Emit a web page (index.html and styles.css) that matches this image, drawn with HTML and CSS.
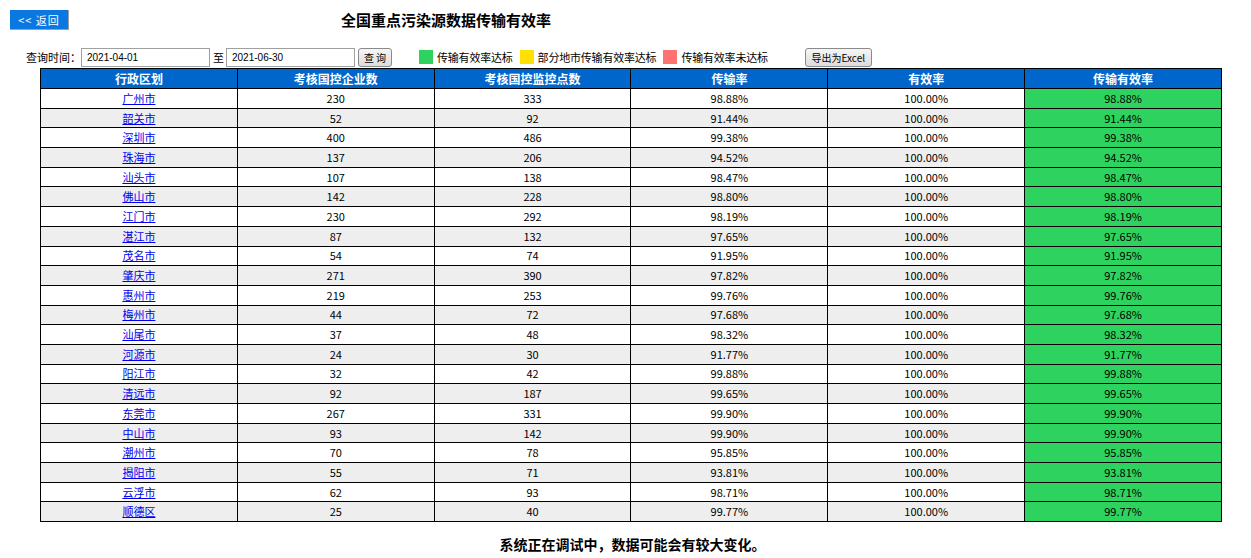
FILE: index.html
```html
<!DOCTYPE html>
<html lang="zh-CN">
<head>
    <meta charset="UTF-8">
    <title>全国重点污染源数据传输有效率</title>
    <link rel="stylesheet" href="styles.css">
</head>
<body>
    <div class="top-bar">
        <a class="back-btn" href="#">&lt;&lt; 返回</a>
        <h3 class="title">全国重点污染源数据传输有效率</h3>
    </div>

    <div class="filter-bar">
        <span class="label">查询时间：</span>
        <input type="text" class="date-input" value="2021-04-01">
        <span class="to">至</span>
        <input type="text" class="date-input" value="2021-06-30">
        <button class="btn query-btn">查 询</button>
        <span class="legend"><i class="swatch green"></i>传输有效率达标</span>
        <span class="legend"><i class="swatch yellow"></i>部分地市传输有效率达标</span>
        <span class="legend"><i class="swatch red"></i>传输有效率未达标</span>
        <button class="btn export-btn">导出为Excel</button>
    </div>

    <table class="data-table">
        <thead>
            <tr>
                <th>行政区划</th>
                <th>考核国控企业数</th>
                <th>考核国控监控点数</th>
                <th>传输率</th>
                <th>有效率</th>
                <th>传输有效率</th>
            </tr>
        </thead>
        <tbody>
            <tr><td><a href="#">广州市</a></td><td>230</td><td>333</td><td>98.88%</td><td>100.00%</td><td class="ok">98.88%</td></tr>
            <tr><td><a href="#">韶关市</a></td><td>52</td><td>92</td><td>91.44%</td><td>100.00%</td><td class="ok">91.44%</td></tr>
            <tr><td><a href="#">深圳市</a></td><td>400</td><td>486</td><td>99.38%</td><td>100.00%</td><td class="ok">99.38%</td></tr>
            <tr><td><a href="#">珠海市</a></td><td>137</td><td>206</td><td>94.52%</td><td>100.00%</td><td class="ok">94.52%</td></tr>
            <tr><td><a href="#">汕头市</a></td><td>107</td><td>138</td><td>98.47%</td><td>100.00%</td><td class="ok">98.47%</td></tr>
            <tr><td><a href="#">佛山市</a></td><td>142</td><td>228</td><td>98.80%</td><td>100.00%</td><td class="ok">98.80%</td></tr>
            <tr><td><a href="#">江门市</a></td><td>230</td><td>292</td><td>98.19%</td><td>100.00%</td><td class="ok">98.19%</td></tr>
            <tr><td><a href="#">湛江市</a></td><td>87</td><td>132</td><td>97.65%</td><td>100.00%</td><td class="ok">97.65%</td></tr>
            <tr><td><a href="#">茂名市</a></td><td>54</td><td>74</td><td>91.95%</td><td>100.00%</td><td class="ok">91.95%</td></tr>
            <tr><td><a href="#">肇庆市</a></td><td>271</td><td>390</td><td>97.82%</td><td>100.00%</td><td class="ok">97.82%</td></tr>
            <tr><td><a href="#">惠州市</a></td><td>219</td><td>253</td><td>99.76%</td><td>100.00%</td><td class="ok">99.76%</td></tr>
            <tr><td><a href="#">梅州市</a></td><td>44</td><td>72</td><td>97.68%</td><td>100.00%</td><td class="ok">97.68%</td></tr>
            <tr><td><a href="#">汕尾市</a></td><td>37</td><td>48</td><td>98.32%</td><td>100.00%</td><td class="ok">98.32%</td></tr>
            <tr><td><a href="#">河源市</a></td><td>24</td><td>30</td><td>91.77%</td><td>100.00%</td><td class="ok">91.77%</td></tr>
            <tr><td><a href="#">阳江市</a></td><td>32</td><td>42</td><td>99.88%</td><td>100.00%</td><td class="ok">99.88%</td></tr>
            <tr><td><a href="#">清远市</a></td><td>92</td><td>187</td><td>99.65%</td><td>100.00%</td><td class="ok">99.65%</td></tr>
            <tr><td><a href="#">东莞市</a></td><td>267</td><td>331</td><td>99.90%</td><td>100.00%</td><td class="ok">99.90%</td></tr>
            <tr><td><a href="#">中山市</a></td><td>93</td><td>142</td><td>99.90%</td><td>100.00%</td><td class="ok">99.90%</td></tr>
            <tr><td><a href="#">潮州市</a></td><td>70</td><td>78</td><td>95.85%</td><td>100.00%</td><td class="ok">95.85%</td></tr>
            <tr><td><a href="#">揭阳市</a></td><td>55</td><td>71</td><td>93.81%</td><td>100.00%</td><td class="ok">93.81%</td></tr>
            <tr><td><a href="#">云浮市</a></td><td>62</td><td>93</td><td>98.71%</td><td>100.00%</td><td class="ok">98.71%</td></tr>
            <tr><td><a href="#">顺德区</a></td><td>25</td><td>40</td><td>99.77%</td><td>100.00%</td><td class="ok">99.77%</td></tr>
        </tbody>
    </table>

    <p class="notice">系统正在调试中，数据可能会有较大变化。</p>
</body>
</html>
```

FILE: styles.css
```css
body {
    margin: 0;
    padding: 9px 0 0 0;
    font-family: "Noto Sans CJK SC", "Liberation Sans", sans-serif;
    font-size: 12px;
    color: #000;
    background: #fff;
}

/* Top bar */
.top-bar {
    display: flex;
    align-items: center;
    height: 21px;
    padding-left: 10px;
}

.back-btn {
    display: block;
    width: 59px;
    height: 20px;
    line-height: 20px;
    background-color: #0a78e0;
    border-bottom: 1px solid #a0a0a0;
    border-right: 1px solid #a0a0a0;
    color: #fff;
    text-align: center;
    text-decoration: none;
    font-size: 11px;
    letter-spacing: 1px;
    box-sizing: border-box;
}

.title {
    margin: 0 0 0 272px;
    font-size: 15px;
    font-weight: bold;
    line-height: 21px;
}

/* Filter bar */
.filter-bar {
    display: flex;
    align-items: center;
    height: 20px;
    margin-top: 17px;
    padding-left: 26px;
    font-size: 11px;
    white-space: nowrap;
}

.date-input {
    width: 129px;
    height: 19px;
    padding: 0 5px;
    border: 1px solid #a0a0a0;
    font-family: "Liberation Sans", sans-serif;
    font-size: 10px;
    box-sizing: border-box;
    margin: 0;
}

.to {
    margin: 0 2px 0 3px;
}

.btn {
    height: 19px;
    padding: 0;
    border: 1px solid #8a8a8a;
    border-radius: 3px;
    background: linear-gradient(#f6f6f6, #dcdcdc);
    font-family: "Noto Sans CJK SC", sans-serif;
    font-size: 10px;
    line-height: 17px;
    white-space: nowrap;
    margin: 0;
}

.query-btn {
    width: 34px;
    margin-left: 3px;
    margin-right: 27px;
}

.legend {
    display: flex;
    align-items: center;
    margin-right: 7px;
    letter-spacing: -0.2px;
}

.swatch {
    display: inline-block;
    width: 14px;
    height: 14px;
    margin-right: 4px;
}

.green { background-color: #2ed35f; }
.yellow { background-color: #ffe000; }
.red { background-color: #ff7272; }

.export-btn {
    width: 67px;
    margin-left: 30px;
}

/* Table */
.data-table {
    width: 1182px;
    margin: 1px 0 0 40px;
    border-collapse: collapse;
    table-layout: fixed;
    border: 1px solid #000;
}

.data-table th {
    height: 19px;
    padding: 0;
    background-color: #0066cc;
    color: #fff;
    font-weight: bold;
    font-size: 12px;
    border: 1px solid #000;
    line-height: 18px;
}

.data-table td {
    height: 18.7px;
    padding: 0;
    text-align: center;
    border: 1px solid #000;
    font-size: 11px;
    line-height: 17px;
}

.data-table tbody tr:nth-child(even) td {
    background-color: #eeeeee;
}

.data-table td a {
    color: #0000ee;
}

.data-table tbody tr td.ok {
    background-color: #2ed35f;
}

.notice {
    margin: 13px 0 0 0;
    text-align: center;
    font-weight: bold;
    font-size: 14px;
    line-height: 18px;
    padding-left: 14px;
}
```
